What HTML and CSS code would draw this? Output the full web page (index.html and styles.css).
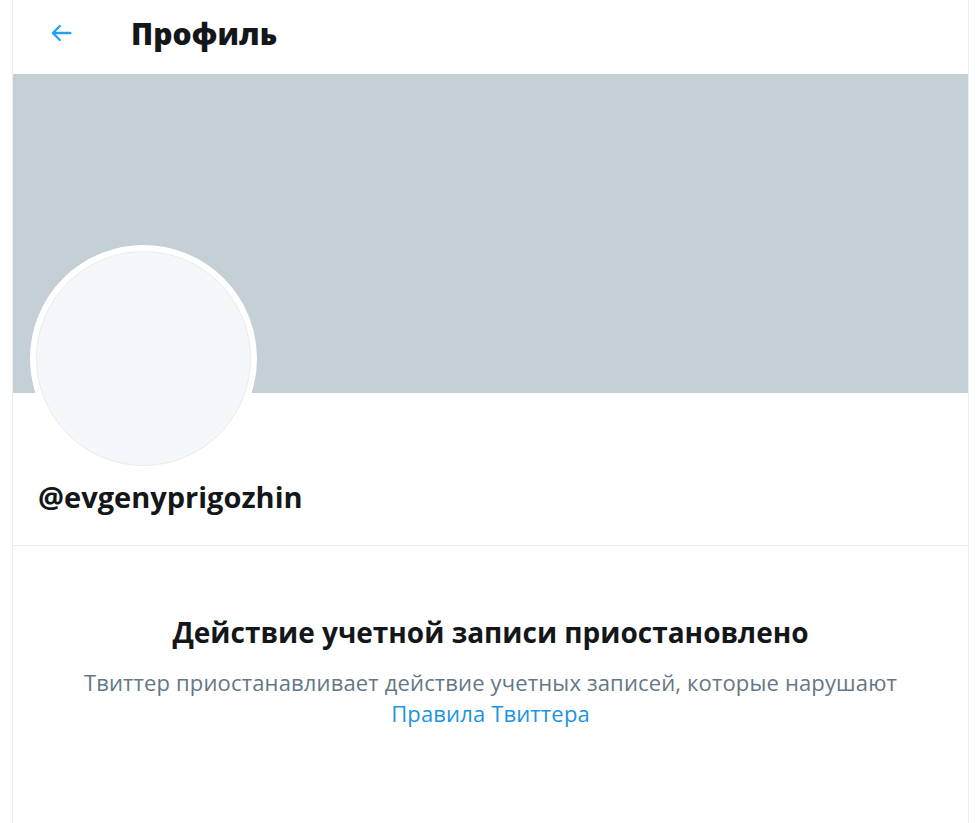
FILE: index.html
```html
<!DOCTYPE html>
<html lang="ru">
<head>
    <meta charset="UTF-8">
    <meta name="viewport" content="width=device-width, initial-scale=1.0">
    <title>Профиль</title>
    <link rel="stylesheet" href="styles.css">
</head>
<body>
    <div class="column">
        <!-- Top bar -->
        <div class="topbar">
            <a class="back" href="#">
                <svg viewBox="0 0 24 24" width="28" height="28">
                    <path d="M20 11H7.414l4.293-4.293a1 1 0 0 0-1.414-1.414l-6 6a1 1 0 0 0 0 1.414l6 6a1 1 0 0 0 1.414-1.414L7.414 13H20a1 1 0 1 0 0-2z"/>
                </svg>
            </a>
            <h2 class="title">Профиль</h2>
        </div>

        <!-- Banner and avatar -->
        <div class="banner"></div>
        <div class="profile">
            <div class="avatar"><div class="avatar-inner"></div></div>
            <div class="handle">@evgenyprigozhin</div>
        </div>

        <!-- Suspended notice -->
        <div class="notice">
            <h3>Действие учетной записи приостановлено</h3>
            <p>Твиттер приостанавливает действие учетных записей, которые нарушают<br>
            <a href="#">Правила Твиттера</a></p>
        </div>
    </div>
</body>
</html>
```
FILE: styles.css
```css
body {
    margin: 0;
    padding: 0;
    background-color: #fff;
    font-family: "Open Sans", "Noto Sans", Arial, sans-serif;
    color: #14171a;
}
.column {
    margin-left: 12px;
    width: 955px;
    min-height: 823px;
    border-left: 1px solid #e6ecf0;
    border-right: 1px solid #e6ecf0;
}
/* Top bar */
.topbar {
    display: flex;
    align-items: center;
    height: 66px;
    padding-bottom: 8px;
}
.topbar .back {
    display: flex;
    margin-left: 34px;
    width: 28px;
}
.topbar .back svg {
    fill: #1da1f2;
}
.topbar .title {
    margin: 0 0 0 56px;
    font-size: 30px;
    font-weight: 800;
    letter-spacing: 0;
}
/* Banner */
.banner {
    height: 319px;
    background-color: #c4cfd6;
}
.profile {
    display: flow-root;
    padding: 0 0 0 17px;
    height: 152px;
    border-bottom: 1px solid #e6ecf0;
}
.avatar {
    width: 215px;
    height: 215px;
    margin-top: -148px;
    border: 6px solid #fff;
    border-radius: 50%;
    background-color: #fff;
}
.avatar-inner {
    width: 100%;
    height: 100%;
    box-sizing: border-box;
    border-radius: 50%;
    border: 1px solid #e6ecf0;
    background-color: #f5f8fa;
}
.handle {
    margin: 5px 0 0 8px;
    font-size: 29px;
    line-height: 40px;
    font-weight: 700;
}
/* Notice */
.notice {
    text-align: center;
    padding-top: 66px;
}
.notice h3 {
    margin: 0;
    font-size: 28px;
    line-height: 40px;
    font-weight: 700;
}
.notice p {
    margin: 15px 0 0;
    font-size: 22px;
    line-height: 31px;
    color: #657786;
    letter-spacing: 0.15px;
}
.notice a {
    color: #1b95e0;
    text-decoration: none;
}
```
